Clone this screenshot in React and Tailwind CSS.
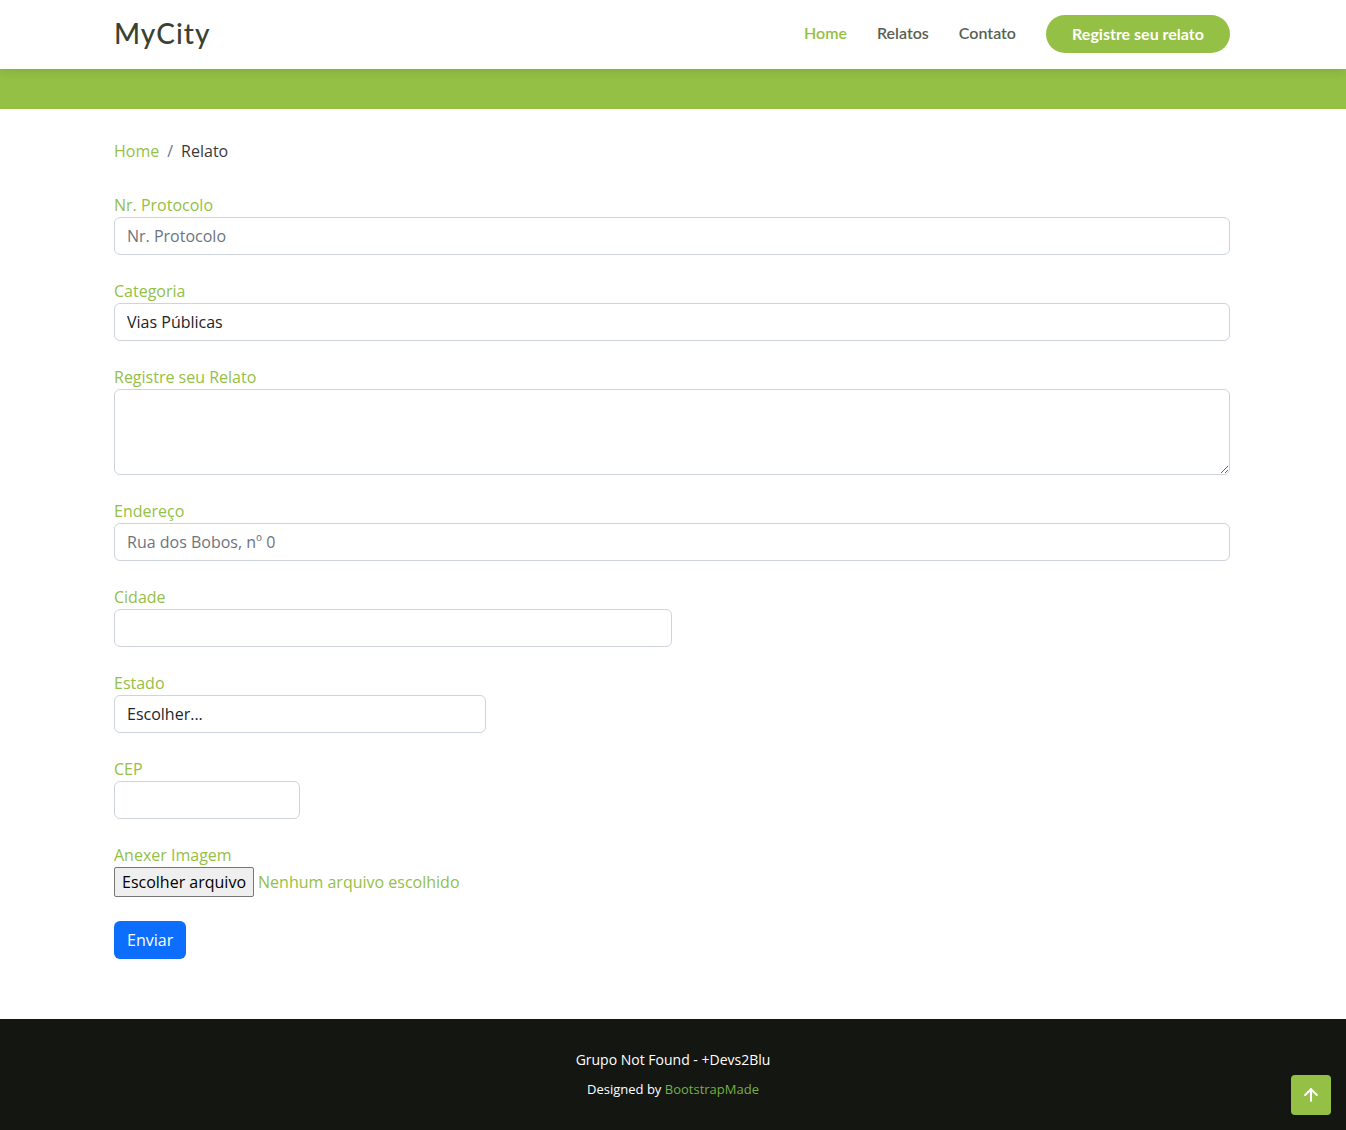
import React from "react";
import { FiArrowUp } from "react-icons/fi";

const green = "text-[#94c045]";

const Field = ({ label, children }) => (
  <div className="mb-6">
    <label className={`block text-base leading-6 ${green}`}>{label}</label>
    {children}
  </div>
);

const inputCls =
  "block h-[38px] w-full rounded-[6px] border border-[#ced4da] bg-white px-3 text-base text-[#212529] placeholder:text-[#6c757d] outline-none";

const App = () => {
  return (
    <div className="min-h-[1130px] bg-white font-['Open_Sans',sans-serif] flex flex-col">
      <header className="relative z-10 h-[69px] bg-white shadow-[0_2px_10px_rgba(0,0,0,0.12)]">
        <div className="mx-auto flex h-full w-[1118px] items-center justify-between pr-[2px] pb-[1px]">
          <a className="font-['Lato',sans-serif] text-[28px] font-medium tracking-[1px] text-[#3b4232] -mt-[2px]">
            MyCity
          </a>
          <nav className="flex items-center font-['Lato',sans-serif] text-[16px] font-semibold">
            <a className="text-[#94c045] -mt-[2px]">Home</a>
            <a className="ml-[30px] text-[#5a5f52] -mt-[2px]">Relatos</a>
            <a className="ml-[30px] text-[#5a5f52] -mt-[2px]">Contato</a>
            <a className="ml-[30px] flex h-[38px] w-[184px] items-center justify-center rounded-full bg-[#94c045] font-bold text-white">
              Registre seu relato
            </a>
          </nav>
        </div>
      </header>

      <div className="h-[40px] bg-[#94c045]" />

      <main className="mx-auto w-[1118px] pr-[2px] flex-1 pt-[30px] pb-[60px]">
        <div className="mb-[30px] flex items-center text-base leading-6">
          <a className={green}>Home</a>
          <span className="px-2 text-[#6c757d]">/</span>
          <span className="text-[#3a3a3a]">Relato</span>
        </div>

        <form>
          <Field label="Nr. Protocolo">
            <input className={inputCls} placeholder="Nr. Protocolo" />
          </Field>
          <Field label="Categoria">
            <input className={inputCls} defaultValue="Vias Públicas" readOnly />
          </Field>
          <Field label="Registre seu Relato">
            <textarea className="block h-[86px] w-full rounded-[6px] border border-[#ced4da] bg-white px-3 py-1.5 text-base outline-none" />
          </Field>
          <Field label="Endereço">
            <input className={inputCls} placeholder="Rua dos Bobos, nº 0" />
          </Field>
          <Field label="Cidade">
            <div className="w-[558px]">
              <input className={inputCls} />
            </div>
          </Field>
          <Field label="Estado">
            <div className="w-[372px]">
              <select className={`${inputCls} appearance-none`} defaultValue="">
                <option value="">Escolher...</option>
              </select>
            </div>
          </Field>
          <Field label="CEP">
            <div className="w-[186px]">
              <input className={inputCls} />
            </div>
          </Field>
          <Field label="Anexer Imagem">
            <div className="flex h-[30px] items-center text-base">
              <span className="flex h-[30px] items-center rounded-[2px] border border-[#767676] bg-[#efefef] px-[7px] text-black">
                Escolher arquivo
              </span>
              <span className={`ml-[4px] ${green}`}>Nenhum arquivo escolhido</span>
            </div>
          </Field>
          <button
            type="button"
            className="h-[38px] rounded-[6px] bg-[#0d6efd] px-[13px] text-base text-white"
          >
            Enviar
          </button>
        </form>
      </main>

      <footer className="relative bg-[#141612] pt-[30px] pb-[31px] text-center text-white">
        <p className="text-sm leading-[21px] mb-[9px]">Grupo Not Found - +Devs2Blu</p>
        <p className="text-[13px] leading-5">
          Designed by <a className="text-[#76b043]">BootstrapMade</a>
        </p>
        <a className="absolute right-[15px] bottom-[15px] flex h-10 w-10 items-center justify-center rounded-[4px] bg-[#94c045] text-white">
          <FiArrowUp size={20} strokeWidth={2.5} />
        </a>
      </footer>
    </div>
  );
};

export default App;
